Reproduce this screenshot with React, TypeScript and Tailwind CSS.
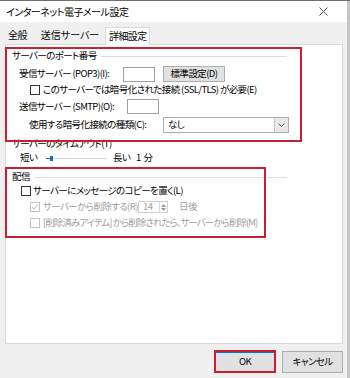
import React from "react";

const font = "[font-family:'Noto_Sans_CJK_JP',sans-serif] [font-feature-settings:'palt']";

function Check({ disabled = false, checked = false }: { disabled?: boolean; checked?: boolean }) {
  return (
    <span
      className={`relative inline-block w-[10px] h-[10px] shrink-0 bg-white border ${
        disabled ? "border-[#c4c4c4]" : "border-[#333333]"
      }`}
    >
      {checked && (
        <svg className="absolute left-0 top-0" width="8" height="8" viewBox="0 0 8 8">
          <path d="M1 4 L3 6.2 L7 1.5" fill="none" stroke={disabled ? "#b5b5b5" : "#333"} strokeWidth="1" />
        </svg>
      )}
    </span>
  );
}

function GroupHeader({ label, className = "" }: { label: string; className?: string }) {
  return (
    <div className={`flex items-center h-[12px] pl-[6px] pr-[55px] ${className}`}>
      <span className="whitespace-nowrap">{label}</span>
      <span className="flex-1 h-px bg-[#dcdcdc] ml-[4px]" />
    </div>
  );
}

export default function App() {
  return (
    <div
      className={`relative w-[350px] h-[378px] bg-[#f0f0f0] text-[9.5px] tracking-[-0.6px] leading-none text-black border-t border-[#707070] overflow-hidden ${font}`}
    >
      {/* right window edge */}
      <div className="absolute right-0 top-0 w-[3px] h-full bg-[#c6c6c6]" />

      {/* title bar */}
      <div className="h-[21px] bg-white flex items-center justify-between pl-[6px] pr-[22px]">
        <span className="text-[10px] tracking-[-0.5px]">インターネット電子メール設定</span>
        <svg width="9" height="9" viewBox="0 0 9 9">
          <path d="M0.5 0.5 L8.5 8.5 M8.5 0.5 L0.5 8.5" stroke="#555" strokeWidth="1" />
        </svg>
      </div>

      {/* tabs */}
      <div className="flex items-end h-[22px] pl-[8px] relative z-10 text-[10px]">
        <div className="shrink-0 h-[17px] flex items-center mb-px whitespace-nowrap">全般</div>
        <div className="shrink-0 h-[17px] flex items-center ml-[14px] mb-px whitespace-nowrap tracking-[0px]">送信サーバー</div>
        <div className="shrink-0 h-[18px] flex items-center justify-center w-[45px] ml-[6px] bg-white border border-b-0 border-[#d9d9d9] -mb-px pb-[2px] whitespace-nowrap">
          詳細設定
        </div>
      </div>

      {/* panel */}
      <div className="ml-[5px] w-[338px] h-[300px] bg-white border border-[#d9d9d9] flex flex-col">
        <GroupHeader label="サーバーのポート番号" className="mt-[5px]" />

        <div className="flex items-center h-[16px] mt-[4px] pl-[13px]">
          <span className="w-[104px] whitespace-nowrap">受信サーバー (POP3)(I):</span>
          <span className="w-[32px] h-[15px] border border-[#a0a0a0] bg-white" />
          <span className="ml-[8px] w-[62px] h-[16px] border border-[#adadad] bg-[#e1e1e1] flex items-center justify-center whitespace-nowrap">
            標準設定(D)
          </span>
        </div>

        <div className="flex items-center h-[12px] mt-[2px] pl-[24px] gap-[3px]">
          <Check />
          <span className="whitespace-nowrap">このサーバーでは暗号化された接続 (SSL/TLS) が必要(E)</span>
        </div>

        <div className="flex items-center h-[15px] mt-[3px] pl-[13px]">
          <span className="w-[108px] whitespace-nowrap">送信サーバー (SMTP)(O):</span>
          <span className="w-[32px] h-[15px] border border-[#a0a0a0] bg-white" />
        </div>

        <div className="flex items-center h-[16px] mt-[3px] pl-[23px]">
          <span className="w-[134px] whitespace-nowrap">使用する暗号化接続の種類(C):</span>
          <span className="w-[126px] h-[16px] border border-[#adadad] bg-white flex items-center justify-between pl-[4px]">
            <span>なし</span>
            <span className="w-[14px] h-full bg-[#e8e8e8] border-l border-[#c8c8c8] flex items-center justify-center">
              <svg width="7" height="4" viewBox="0 0 7 4">
                <path d="M0.5 0.5 L3.5 3.5 L6.5 0.5" fill="none" stroke="#606060" strokeWidth="1" />
              </svg>
            </span>
          </span>
        </div>

        <div className="h-[12px] mt-[5px] pl-[6px] flex items-center whitespace-nowrap">サーバーのタイムアウト(T)</div>

        <div className="flex items-center h-[12px] mt-[2px] pl-[14px]">
          <span className="w-[26px]">短い</span>
          <span className="relative w-[60px] h-[5px] flex items-center">
            <span className="absolute left-0 w-[4px] h-px bg-[#555]" />
            <span className="absolute left-[4px] right-0 h-px bg-[#d4d4d4]" />
            <span className="absolute left-[4px] w-[3px] h-[5px] bg-[#0078d7]" />
          </span>
          <span className="ml-[7px] w-[23px]">長い</span>
          <span className="whitespace-nowrap tracking-normal">1 分</span>
        </div>

        <GroupHeader label="配信" className="mt-[7px]" />

        <div className="flex items-center h-[12px] mt-[2px] pl-[15px] gap-[2px]">
          <Check />
          <span className="whitespace-nowrap">サーバーにメッセージのコピーを置く(L)</span>
        </div>

        <div className="flex items-center h-[12px] mt-[4px] pl-[24px] text-[#a0a0a0]">
          <Check disabled checked />
          <span className="ml-[3px] w-[95px] whitespace-nowrap">サーバーから削除する(R)</span>
          <span className="w-[30px] h-[12px] border border-[#cfcfcf] flex items-center justify-between pl-[4px]">
            <span>14</span>
            <span className="w-[8px] h-full flex flex-col items-center justify-center gap-[1px] border-l border-[#dcdcdc]">
              <svg width="5" height="3" viewBox="0 0 5 3"><path d="M0 3 L2.5 0 L5 3 Z" fill="#9a9a9a" /></svg>
              <svg width="5" height="3" viewBox="0 0 5 3"><path d="M0 0 L2.5 3 L5 0 Z" fill="#9a9a9a" /></svg>
            </span>
          </span>
          <span className="ml-[11px]">日後</span>
        </div>

        <div className="flex items-center h-[12px] mt-[4px] pl-[24px] gap-[3px] text-[#a0a0a0] tracking-[-0.95px]">
          <Check disabled />
          <span className="whitespace-nowrap">[削除済みアイテム] から削除されたら、サーバーから削除(M)</span>
        </div>
      </div>

      {/* buttons */}
      <div className="flex justify-end gap-[6px] mt-[6px] pr-[7px]">
        <div className="w-[62px] h-[23px] border-2 border-[#c8202f] flex">
          <div className="flex-1 bg-[#e1e1e1] border-t border-[#0078d7] flex items-center justify-center">OK</div>
        </div>
        <div className="w-[61px] h-[22px] mt-px bg-[#e1e1e1] border border-[#adadad] flex items-center justify-center whitespace-nowrap">
          キャンセル
        </div>
      </div>

      {/* red annotation boxes */}
      <div className="absolute left-[5px] top-[46px] w-[297px] h-[95px] border-2 border-[#c8202f] pointer-events-none" />
      <div className="absolute left-[5px] top-[166px] w-[261px] h-[71px] border-2 border-[#c8202f] pointer-events-none" />
    </div>
  );
}
